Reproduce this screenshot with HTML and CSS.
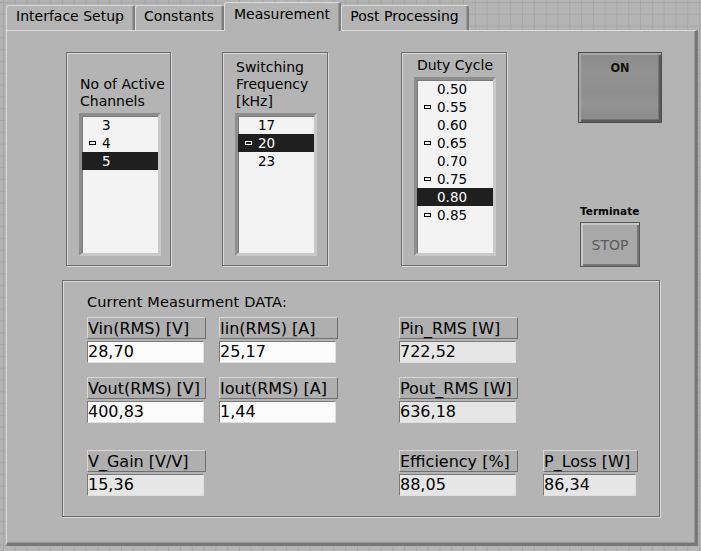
FILE: index.html
```html
<!DOCTYPE html>
<html>
<head>
<meta charset="utf-8">
<title>Measurement</title>
<link rel="stylesheet" href="styles.css">
</head>
<body>
<div class="tabctl">
  <div class="tabs">
    <div class="tab t-iface">Interface Setup</div>
    <div class="tab t-const">Constants</div>
    <div class="tab tab-active t-meas">Measurement</div>
    <div class="tab t-post">Post Processing</div>
  </div>
  <div class="panel">
    <div class="top-row">
      <div class="group g-chan">
        <div class="group-title">No of Active<br>Channels</div>
        <div class="listbox lb-short">
          <div class="item"><span class="mark"></span><span>3</span></div>
          <div class="item marked"><span class="mark"></span><span>4</span></div>
          <div class="item selected"><span class="mark"></span><span>5</span></div>
        </div>
      </div>
      <div class="group g-freq">
        <div class="group-title">Switching<br>Frequency<br>[kHz]</div>
        <div class="listbox lb-short">
          <div class="item"><span class="mark"></span><span>17</span></div>
          <div class="item marked selected"><span class="mark"></span><span>20</span></div>
          <div class="item"><span class="mark"></span><span>23</span></div>
        </div>
      </div>
      <div class="group g-duty">
        <div class="group-title centered">Duty Cycle</div>
        <div class="listbox lb-tall">
          <div class="item"><span class="mark"></span><span>0.50</span></div>
          <div class="item marked"><span class="mark"></span><span>0.55</span></div>
          <div class="item"><span class="mark"></span><span>0.60</span></div>
          <div class="item marked"><span class="mark"></span><span>0.65</span></div>
          <div class="item"><span class="mark"></span><span>0.70</span></div>
          <div class="item marked"><span class="mark"></span><span>0.75</span></div>
          <div class="item selected"><span class="mark"></span><span>0.80</span></div>
          <div class="item marked"><span class="mark"></span><span>0.85</span></div>
        </div>
      </div>
      <div class="ctrl-col">
        <div class="btn-on">ON</div>
        <div class="term-label">Terminate</div>
        <div class="btn-stop">STOP</div>
      </div>
    </div>

    <div class="data">
      <div class="data-title">Current Measurment DATA:</div>
      <div class="fields">
        <div class="field a-vin"><div class="f-label">Vin(RMS) [V]</div><div class="f-value">28,70</div></div>
        <div class="field a-iin"><div class="f-label">Iin(RMS) [A]</div><div class="f-value">25,17</div></div>
        <div class="field a-pin"><div class="f-label">Pin_RMS [W]</div><div class="f-value f-ind">722,52</div></div>
        <div class="field a-vout"><div class="f-label">Vout(RMS) [V]</div><div class="f-value">400,83</div></div>
        <div class="field a-iout"><div class="f-label">Iout(RMS) [A]</div><div class="f-value">1,44</div></div>
        <div class="field a-pout"><div class="f-label">Pout_RMS [W]</div><div class="f-value f-ind">636,18</div></div>
        <div class="field a-gain"><div class="f-label">V_Gain [V/V]</div><div class="f-value f-ind">15,36</div></div>
        <div class="field a-eff"><div class="f-label">Efficiency [%]</div><div class="f-value f-ind">88,05</div></div>
        <div class="field a-loss"><div class="f-label">P_Loss [W]</div><div class="f-value f-ind">86,34</div></div>
      </div>
    </div>
  </div>
</div>
</body>
</html>
```

FILE: styles.css
```css
* { box-sizing: border-box; }

html, body { margin: 0; padding: 0; }

body {
  width: 701px;
  height: 551px;
  overflow: hidden;
  background-color: #b4b4b4;
  background-image:
    linear-gradient(to right, #a7a7a7 1px, transparent 1px),
    linear-gradient(to bottom, #a7a7a7 1px, transparent 1px);
  background-size: 11.8px 11.8px;
  background-position: 3px 2px;
  font-family: "DejaVu Sans", "Verdana", sans-serif;
  color: #000;
}

/* ---------- tab control ---------- */
.tabctl {
  margin-left: 6px;
  padding-top: 2px;
  width: 692px;
}

.tabs {
  display: flex;
  align-items: flex-end;
  height: 28px;
  position: relative;
  z-index: 2;
}

.tab {
  height: 25px;
  padding-top: 2px;
  font-size: 14px;
  line-height: 16px;
  text-align: center;
  white-space: nowrap;
  background: #b4b4b4;
  border-top: 1px solid #dcdcdc;
  border-left: 1px solid #dcdcdc;
  border-right: 2px solid #7c7c7c;
  border-radius: 3px 3px 0 0;
  box-shadow: inset -1px 0 0 #9a9a9a;
}

.t-iface { width: 129px; }
.t-const { width: 89px; }
.t-meas  { width: 117px; }
.t-post  { width: 128px; }

.tab-active {
  height: 29px;
  margin-bottom: -1px;
  padding-top: 3px;
}

.panel {
  position: relative;
  z-index: 1;
  width: 692px;
  height: 516px;
  background: #b4b4b4;
  border-top: 1px solid #dcdcdc;
  border-left: 1px solid #dcdcdc;
  border-right: 3px solid #787878;
  border-bottom: 3px solid #787878;
  box-shadow: inset -1px -1px 0 #979797;
  padding: 21px 0 0 55px;
}

/* ---------- top row ---------- */
.top-row {
  display: flex;
  align-items: flex-start;
  height: 215px;
  margin-left: 4px;
}

.group {
  height: 214px;
  border: 1px solid #6b6b6b;
  box-shadow: inset 1px 1px 0 #dadada, 1px 1px 0 #dadada;
  display: flex;
  flex-direction: column;
  justify-content: flex-end;
  padding: 0 0 9px 12px;
}

.g-chan { width: 105px; }
.g-freq { width: 106px; margin-left: 51px; }
.g-duty { width: 106px; margin-left: 73px; }

.group-title {
  font-size: 14px;
  line-height: 17px;
  padding-left: 1px;
  margin-bottom: 3px;
  white-space: nowrap;
}

.group-title.centered {
  width: 82px;
  padding-left: 0;
  text-align: center;
}

.listbox {
  width: 82px;
  background: #f3f3f3;
  border: 3px solid;
  border-color: #8e8e8e #c9c9c9 #c9c9c9 #8e8e8e;
  box-shadow: inset 1px 1px 0 #7a7a7a;
}

.lb-short { height: 143px; }
.lb-tall  { height: 179px; }

.item {
  display: flex;
  align-items: center;
  height: 18px;
  font-size: 13.5px;
  line-height: 18px;
  white-space: nowrap;
}

.mark {
  width: 7px;
  height: 4px;
  margin-left: 7px;
  margin-right: 6px;
  border: 1px solid transparent;
}

.item.marked .mark { border-color: #000; }

.item.selected {
  background: #1f1f1f;
  color: #fff;
}

.item.selected.marked .mark { border-color: #fff; }

/* ---------- buttons column ---------- */
.ctrl-col {
  display: flex;
  flex-direction: column;
  width: 84px;
  height: 215px;
  margin-left: 71px;
}

.btn-on {
  width: 84px;
  height: 71px;
  border: 1px solid #4b4b4b;
  background: linear-gradient(#8b8b8b 0%, #929292 30%, #8e8e8e 55%, #949494 75%, #888888 100%);
  box-shadow: inset 2px 2px 0 #a6a6a6, inset -2px -2px 0 #5c5c5c, inset -3px -3px 0 #747474;
  padding-top: 8px;
  text-align: center;
  font-family: "Liberation Sans Narrow", "DejaVu Sans Condensed", "DejaVu Sans", sans-serif;
  font-weight: bold;
  font-size: 12.5px;
  line-height: 14px;
  color: #111;
}

.term-label {
  margin-top: auto;
  margin-left: 2px;
  font-weight: bold;
  font-size: 10.5px;
  line-height: 13px;
  white-space: nowrap;
}

.btn-stop {
  width: 60px;
  height: 45px;
  margin-top: 4px;
  margin-left: 2px;
  display: flex;
  align-items: center;
  justify-content: center;
  border: 1px solid #575757;
  background: #a8a8a8;
  box-shadow: inset 2px 2px 0 #c6c6c6, inset -2px -2px 0 #767676;
  font-size: 14px;
  color: #5c5c5c;
}

/* ---------- data frame ---------- */
.data {
  margin-top: 13px;
  width: 598px;
  height: 237px;
  border: 1px solid #6b6b6b;
  box-shadow: inset 1px 1px 0 #dadada, 1px 1px 0 #dadada;
  padding: 13px 0 0 24px;
}

.data-title {
  font-size: 14.5px;
  letter-spacing: 0.15px;
  line-height: 16px;
  white-space: nowrap;
}

.fields {
  margin-top: 7px;
  display: grid;
  grid-template-columns: 119px 13px 119px 61px 119px 25px 95px;
  grid-template-rows: 46px 14px 46px 27px 46px;
  grid-template-areas:
    "vin  . iin  . pin  . ."
    ".    . .    . .    . ."
    "vout . iout . pout . ."
    ".    . .    . .    . ."
    "gain . .    . eff  . loss";
}

.a-vin  { grid-area: vin; }
.a-iin  { grid-area: iin; }
.a-pin  { grid-area: pin; }
.a-vout { grid-area: vout; }
.a-iout { grid-area: iout; }
.a-pout { grid-area: pout; }
.a-gain { grid-area: gain; }
.a-eff  { grid-area: eff; }
.a-loss { grid-area: loss; }

.field {
  display: flex;
  flex-direction: column;
  gap: 2px;
}

.f-label {
  height: 22px;
  width: 100%;
  border: 1px solid;
  border-color: #d8d8d8 #6f6f6f #6f6f6f #d8d8d8;
  background: #afafaf;
  font-size: 16px;
  line-height: 20px;
  padding-top: 1px;
  white-space: nowrap;
}

.f-value {
  height: 22px;
  width: calc(100% - 2px);
  border: 1px solid;
  border-color: #7a7a7a #e0e0e0 #e0e0e0 #7a7a7a;
  background: #fbfbfb;
  font-size: 16px;
  line-height: 20px;
  white-space: nowrap;
}

.f-ind { background: #e6e6e6; }
```
